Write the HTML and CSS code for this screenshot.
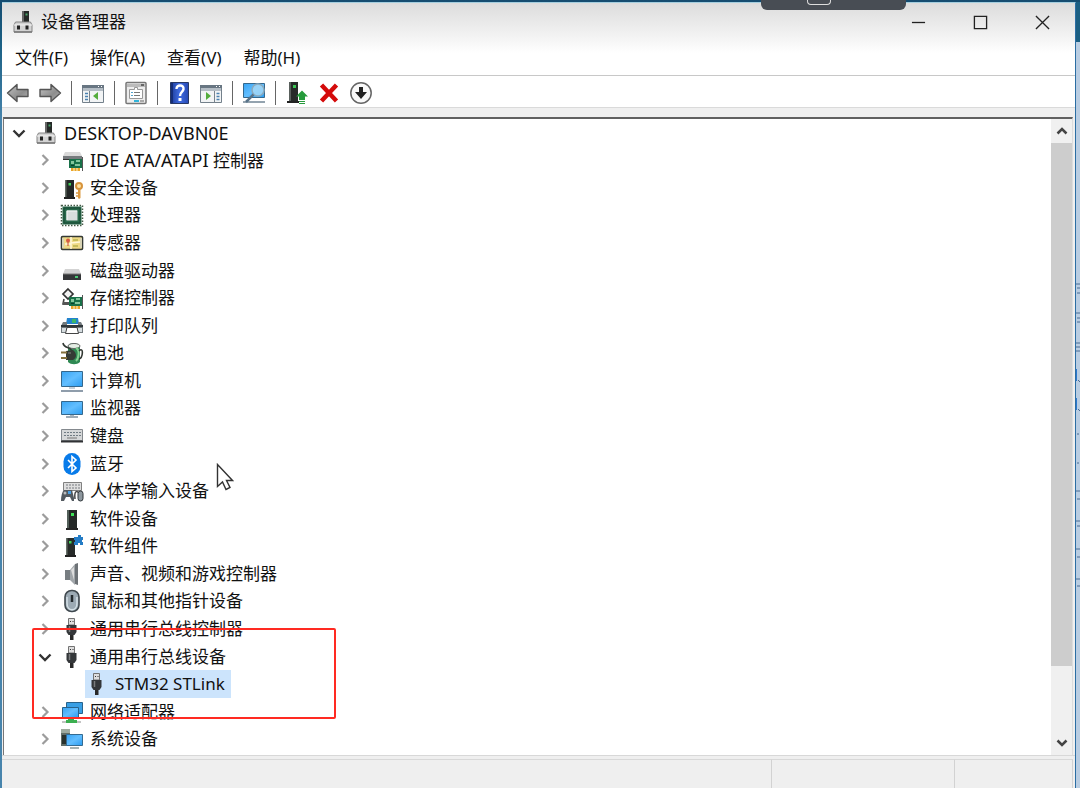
FILE: index.html
```html
<!DOCTYPE html>
<html lang="zh-CN">
<head>
<meta charset="utf-8">
<title>设备管理器</title>
<link rel="stylesheet" href="styles.css">
</head>
<body>
<svg class="sprite" aria-hidden="true">
  <defs>
    <linearGradient id="g-screen" x1="0" y1="0" x2="1" y2="1"><stop offset="0" stop-color="#37a4f4"/><stop offset=".5" stop-color="#62beff"/><stop offset="1" stop-color="#2b9cf0"/></linearGradient>
    <linearGradient id="g-arrow" x1="0" y1="0" x2="1" y2="1"><stop offset="0" stop-color="#c4c4c4"/><stop offset=".6" stop-color="#8d8d8d"/><stop offset="1" stop-color="#b4b4b4"/></linearGradient>
    <linearGradient id="g-help" x1="0" y1="0" x2="1" y2="0"><stop offset="0" stop-color="#1b3a97"/><stop offset=".5" stop-color="#3f6be0"/><stop offset="1" stop-color="#2649b4"/></linearGradient>
  </defs>
  <symbol id="right" viewBox="0 0 14 14"><path d="M4.500 2L9.500 7l-5 5" fill="none" stroke="#9c9c9c" stroke-width="2.200"/></symbol>
  <symbol id="down" viewBox="0 0 14 14"><path d="M1.500 4.500L7 10l5.500-5.500" fill="none" stroke="#333" stroke-width="2.400"/></symbol>
  <symbol id="devmgr" viewBox="0 0 24 24"><path d="M11 1h7v11h-7z" fill="#252927"/><path d="M11 1h2v11h-2z" fill="#666"/><path d="M14.500 3.500h2v2h-2z" fill="#48a568"/><path d="M4.500 12h15l1.500 3v7H3v-7z" fill="#d3d3d3" stroke="#858585"/><path d="M3 15h18" stroke="#f4f4f4"/><path d="M6 15.500h3v4H6zM14.500 15.500h3v4h-3z" fill="#222"/><path d="M3 22h18" stroke="#777" stroke-width="1.500"/></symbol>
  <symbol id="card" viewBox="0 0 24 24"><path d="M9 11h13v9H9z" fill="#197149"/><path d="M11 13h3v3h-3zM16 12h4v2h-4zM15 16h5v2h-5z" fill="#83c79c"/><path d="M11 17h3v1h-3z" fill="#0a402b"/><path d="M22.500 9v14" stroke="#555"/><path d="M11 20h9v3h-9z" fill="#eaa52a"/><path d="M14 20v3M17 20v3" stroke="#fff4cc"/></symbol>
  <symbol id="ide" viewBox="0 0 24 24"><path d="M5 4h15l2 4H3z" fill="#d9d9d9"/><path d="M3 8h19v4H3z" fill="#777b7e"/><path d="M3 11h11v1H3z" fill="#333"/><use href="#card" width="24" height="24"/></symbol>
  <symbol id="tower" viewBox="0 0 24 24"><path d="M7 3h10v18H7z" fill="#242827"/><path d="M7 3h2v18H7z" fill="#53605a"/><path d="M11 6h3v3h-3z" fill="#3fe357"/><path d="M6 21h12v2H6z" fill="#242424"/></symbol>
  <symbol id="security" viewBox="0 0 24 24"><path d="M5 4h9v17H5z" fill="#242827"/><path d="M5 4h1.500v17H5z" fill="#677069"/><path d="M8.500 7h2.500v2.500H8.500z" fill="#42d05a"/><path d="M4 21h11v2H4z" fill="#222"/><circle cx="19" cy="10" r="3" fill="#ffe2a1" stroke="#d7943c" stroke-width="2"/><path d="M18 13h2.500v9L19 23l-1-1z" fill="#db9b44"/><path d="M16 17h3M16 20h3" stroke="#db9b44" stroke-width="1.500"/></symbol>
  <symbol id="cpu" viewBox="0 0 24 24"><path d="M1.500 2.500h21v20h-21z" fill="none" stroke="#445a46" stroke-width="1.500" stroke-dasharray="1.500 1.500"/><path d="M2.500 3.500h19v18h-19z" fill="#28694b"/><path d="M4 5h16v15H4z" fill="none" stroke="#184934"/><path d="M6.500 7.500h11v10h-11z" fill="#d9dddd"/><path d="M7 17V8h10" fill="none" stroke="#f7f7f7"/></symbol>
  <symbol id="sensor" viewBox="0 0 24 24"><rect x="1.500" y="5.500" width="21" height="13" rx="1" fill="#efda86" stroke="#353a35" stroke-width="1.600"/><path d="M3 7v10M21 7v10" stroke="#d8d3b4" stroke-width="2"/><path d="M11 6v12M11 12l9-1M5 13h6" stroke="#fff9da" stroke-width="1.500"/><circle cx="8" cy="9.500" r="2" fill="#d75b42"/><path d="M8 11v4" stroke="#c74734"/><path d="M13 8h5v2h-5zM13 14h5v2h-5z" fill="#c6bd5c"/></symbol>
  <symbol id="disk" viewBox="0 0 24 24"><path d="M5 10h14l2 5H3z" fill="#d3d3d3"/><path d="M3 15h18v6H3z" fill="#343638"/><path d="M3 15h18" stroke="#777"/><path d="M15 17h3v2h-3z" fill="#4bc975"/></symbol>
  <symbol id="storage" viewBox="0 0 24 24"><path d="M8 3l5 5-5 5-5-5z" fill="#f2f2f2" stroke="#333" stroke-width="1.700"/><path d="M4 13l-1 5h7" fill="none" stroke="#444" stroke-width="1.600"/><path d="M3 16h7v3H3z" fill="#555"/><use href="#card" width="24" height="24"/></symbol>
  <symbol id="printer" viewBox="0 0 24 24"><path d="M7 4h11l1 6H6z" fill="#2383cd"/><path d="M12 5h4v4h-4z" fill="#3bb66a"/><path d="M3 8h4v3h11V8h3l2 4v7H1v-7z" fill="#72797d"/><path d="M1 11h22v2H1z" fill="#30373b"/><path d="M2 14h4v4H2zM18 14h4v4h-4z" fill="#d6dde0"/><path d="M7 13.500h10l1.500 6h-13z" fill="#fff" stroke="#444"/></symbol>
  <symbol id="battery" viewBox="0 0 24 24"><path d="M8 5c2-4 9-4 12 0v16c-3 3-9 3-12 0z" fill="#2f8953"/><ellipse cx="14" cy="5" rx="6" ry="2.500" fill="#e4eee5" stroke="#666"/><path d="M16 7c4 2 3 10 0 13" fill="none" stroke="#83cf90" stroke-width="2"/><path d="M3 2c1 6 7 3 9 8M19 10c5-5 4 7 0 8" fill="none" stroke="#323833" stroke-width="1.600"/><path d="M6 10l7-1c4 3 4 8 0 10H6z" fill="#343a35"/><path d="M1 11.500h6M1 17h6" stroke="#84703d" stroke-width="2"/><path d="M8 12h3" stroke="#888"/></symbol>
  <symbol id="computer" viewBox="0 0 24 24"><path d="M1.500 2.500h21v15h-21z" fill="url(#g-screen)" stroke="#35688d"/><path d="M9 18h6v2H9z" fill="#c6d0d8"/><path d="M1 22h22" stroke="#738596" stroke-width="1.600"/></symbol>
  <symbol id="monitor" viewBox="0 0 24 24"><path d="M1.500 5.500h21v13h-21z" fill="url(#g-screen)" stroke="#35688d"/><path d="M10 19h4v1h-4z" fill="#aab8c2"/><path d="M6 21h12" stroke="#7c8f9e" stroke-width="1.500"/></symbol>
  <symbol id="keyboard" viewBox="0 0 24 24"><path d="M1.500 5.500h21v11h-21z" fill="#d5d7d8" stroke="#84898e"/><path d="M4 8.500h17M4 11.500h17" stroke="#707b83" stroke-dasharray="2 1"/><path d="M7 14h10" stroke="#777"/><path d="M1 16.500h22v2H1z" fill="#303235"/></symbol>
  <symbol id="bluetooth" viewBox="0 0 24 24"><rect x="3.500" y="1" width="17" height="22" rx="8.500" fill="#087be9"/><path d="M8 8l8 8-4 3.500v-15L16 8l-8 8" fill="none" stroke="#fff" stroke-width="1.600"/></symbol>
  <symbol id="hid" viewBox="0 0 24 24"><path d="M3.500 3.500h18v8h-18z" fill="#dedede" stroke="#818181"/><path d="M6 6h14M6 9h14" stroke="#767b80" stroke-dasharray="2 1"/><path d="M4 11h8l2 8v3h-2l-2-4H6l-2 4H1c0-5 1-9 3-11z" fill="#535a60"/><circle cx="5" cy="14" r="1.500" fill="#bbb"/><path d="M8 12h3v3H8z" fill="#4ba0e2"/><path d="M15 20c-1-8 2-10 5-4" fill="none" stroke="#444" stroke-width="1.500"/><rect x="18" y="12" width="5" height="10" rx="2.500" fill="#8d979e" stroke="#30363a"/></symbol>
  <symbol id="component" viewBox="0 0 24 24"><path d="M6 4h9v17H6z" fill="#272b29"/><path d="M6 4h1.500v17H6z" fill="#677069"/><path d="M9 7h2.500v2.500H9z" fill="#42d05a"/><path d="M5 21h11v2H5z" fill="#222"/><path d="M14 3h4V1h3v2h2v3h-1v2h1v3h-3V9h-2v2h-4V8h1V6h-1z" fill="#247cc5"/></symbol>
  <symbol id="speaker" viewBox="0 0 24 24"><path d="M5 8h5v10H5z" fill="#777d81"/><path d="M10 8l5-6v21l-5-5z" fill="#a1a6aa"/><path d="M15 2l3-1v22l-3-1z" fill="#6e7377"/><path d="M11 8l3-3v13z" fill="#ddd"/></symbol>
  <symbol id="mouse" viewBox="0 0 24 24"><rect x="5" y="1.500" width="14" height="21" rx="6.500" fill="#9caab4" stroke="#3f484e" stroke-width="1.600"/><path d="M7 8v6c0 9 10 9 10 0V8" fill="none" stroke="#d4e0e6" stroke-width="1.500"/><path d="M12 6v7" stroke="#252b2f" stroke-width="2.500"/></symbol>
  <symbol id="usb" viewBox="0 0 24 24"><path d="M8.500 1.500h6V8h-6z" fill="#dedede" stroke="#737373"/><path d="M10 4h1v1h-1zM12.500 4h1v1h-1z" fill="#333"/><path d="M6.500 8h10v7l-2 3h-6l-2-3z" fill="#34373a"/><path d="M9.500 9v6" stroke="#7a7c7e" stroke-width="1.500"/><path d="M10 18h3.500v5H10z" fill="#292929"/></symbol>
  <symbol id="network" viewBox="0 0 24 24"><path d="M6.500 2.500h16v11h-16z" fill="#389fe5" stroke="#28638c"/><path d="M2.500 7.500h16v10h-16z" fill="url(#g-screen)" stroke="#28638c"/><path d="M2 22h19" stroke="#c4c4c4" stroke-width="2"/><path d="M8 19h6v1h3v3H6v-3h2z" fill="#3baf50"/></symbol>
  <symbol id="system" viewBox="0 0 24 24"><path d="M1 2h9v17H1z" fill="#626e67"/><path d="M1 2h9v4H1z" fill="#9fab9f"/><path d="M2 8h4v9H2z" fill="#29322e"/><path d="M6.500 7.500h16v11h-16z" fill="url(#g-screen)" stroke="#356b91"/><path d="M10 21h9" stroke="#899" stroke-width="1.500"/></symbol>
  <symbol id="back" viewBox="0 0 24 24"><path d="M1.500 12L11 3.500v5h11v7H11v5z" fill="url(#g-arrow)" stroke="#555" stroke-width="1.400" stroke-linejoin="round"/></symbol>
  <symbol id="forward" viewBox="0 0 24 24"><path d="M22.500 12L13 3.500v5H2v7h11v5z" fill="url(#g-arrow)" stroke="#555" stroke-width="1.400" stroke-linejoin="round"/></symbol>
  <symbol id="console" viewBox="0 0 24 24"><path d="M1.500 4.500h21v17h-21z" fill="#f2f4f5" stroke="#73808b"/><path d="M1 4h22v3H1z" fill="#687682"/><path d="M17 5h1v1h-1zM20 5h1v1h-1z" fill="#fff"/><path d="M2 7h20v3H2z" fill="#b4bdc5"/><path d="M8.500 10v12" stroke="#78838d"/><path d="M4 12.500h3M4 15.500h3M4 18.500h3" stroke="#4b82b1" stroke-width="1.500"/><path d="M17 11v8l-5-4z" fill="#54ad3c"/></symbol>
  <symbol id="action" viewBox="0 0 24 24"><path d="M1.500 4.500h21v17h-21z" fill="#f2f4f5" stroke="#73808b"/><path d="M1 4h22v3H1z" fill="#687682"/><path d="M17 5h1v1h-1zM20 5h1v1h-1z" fill="#fff"/><path d="M2 7h20v3H2z" fill="#b4bdc5"/><path d="M15.500 10v12" stroke="#78838d"/><path d="M17.500 12.500h3M17.500 15.500h3M17.500 18.500h3" stroke="#4b82b1" stroke-width="1.500"/><path d="M7 11v8l5-4z" fill="#54ad3c"/></symbol>
  <symbol id="properties" viewBox="0 0 24 24"><rect x="2" y="1.500" width="20" height="21" rx="1" fill="#ededed" stroke="#777" stroke-width="1.500"/><path d="M3 4.500h18" stroke="#bbb" stroke-width="3"/><path d="M17 3h3v2h-3z" fill="#666"/><path d="M5.500 8.500h5v-2h3v2h5v9h-13z" fill="#fff" stroke="#999"/><path d="M10 11.500h6M10 14.500h6" stroke="#777"/><path d="M7 11.500h2M7 14.500h2" stroke="#52a4cc"/><path d="M10 20h5" stroke="#31b4da" stroke-width="2"/><path d="M16 20h4" stroke="#aaa" stroke-width="2"/></symbol>
  <symbol id="help" viewBox="0 0 24 24"><path d="M3.500 1.500h18v21h-18z" fill="url(#g-help)" stroke="#283864"/><path d="M5 2v20" stroke="#142d79" stroke-width="2"/><path d="M9.500 8c0-5 7.500-4.500 7 0-.3 3-3.500 3-3.500 7" fill="none" stroke="#fff" stroke-width="2.400"/><path d="M11.500 17h3v3h-3z" fill="#fff"/></symbol>
  <symbol id="scan" viewBox="0 0 24 24"><path d="M1.500 2.500h21v14h-21z" fill="url(#g-screen)" stroke="#35688d"/><path d="M1 21h22" stroke="#718495" stroke-width="1.500"/><circle cx="16" cy="9" r="6" fill="#a8daf6" fill-opacity=".8" stroke="#8baabd" stroke-width="1.500"/><path d="M11.500 13.500L4 21" stroke="#59748a" stroke-width="2.500"/></symbol>
  <symbol id="update" viewBox="0 0 24 24"><path d="M4 1h9v19H4z" fill="#272b29"/><path d="M4 1h2v19H4z" fill="#59605c"/><path d="M8 4h3v3H8z" fill="#3dc654"/><path d="M2 20h12v2H2z" fill="#222"/><path d="M17 9.500l6 6h-3V19h-6v-3.500h-3z" fill="#269b3b"/><path d="M14 20.500h6M14 22.500h6" stroke="#269b3b"/></symbol>
  <symbol id="remove" viewBox="0 0 24 24"><path d="M4.500 4l15 16M19.500 4l-15 16" stroke="#d40b0b" stroke-width="4.500"/></symbol>
  <symbol id="disable" viewBox="0 0 24 24"><circle cx="12" cy="12" r="10.200" fill="#fafafa" stroke="#666" stroke-width="1.500"/><path d="M10 6h4v5h4l-6 7-6-7h4z" fill="#222"/></symbol>
</svg>

<div class="desktop">
  <main class="window">
    <header class="titlebar">
      <svg class="icon"><use href="#devmgr"/></svg>
      <h1 class="title">设备管理器</h1>
      <div class="controls">
        <button class="control" aria-label="最小化"><svg class="glyph" viewBox="0 0 16 16"><path d="M1 8h14"/></svg></button>
        <button class="control" aria-label="最大化"><svg class="glyph" viewBox="0 0 16 16"><path d="M1.500 1.500h13v13h-13z"/></svg></button>
        <button class="control" aria-label="关闭"><svg class="glyph" viewBox="0 0 16 16"><path d="M1 1l14 14M15 1L1 15"/></svg></button>
      </div>
    </header>
    <nav class="menubar">
      <button class="menu">文件(F)</button>
      <button class="menu">操作(A)</button>
      <button class="menu">查看(V)</button>
      <button class="menu">帮助(H)</button>
    </nav>
    <div class="toolbar" role="toolbar">
      <button class="tool" aria-label="后退"><svg class="icon"><use href="#back"/></svg></button>
      <button class="tool" aria-label="前进"><svg class="icon"><use href="#forward"/></svg></button>
      <span class="separator"></span>
      <button class="tool" aria-label="显示控制台树"><svg class="icon"><use href="#console"/></svg></button>
      <span class="separator"></span>
      <button class="tool" aria-label="属性"><svg class="icon"><use href="#properties"/></svg></button>
      <span class="separator"></span>
      <button class="tool" aria-label="帮助"><svg class="icon"><use href="#help"/></svg></button>
      <button class="tool" aria-label="显示操作窗格"><svg class="icon"><use href="#action"/></svg></button>
      <span class="separator"></span>
      <button class="tool" aria-label="扫描硬件改动"><svg class="icon"><use href="#scan"/></svg></button>
      <span class="separator"></span>
      <button class="tool" aria-label="更新驱动程序"><svg class="icon"><use href="#update"/></svg></button>
      <button class="tool" aria-label="卸载设备"><svg class="icon"><use href="#remove"/></svg></button>
      <button class="tool" aria-label="禁用设备"><svg class="icon"><use href="#disable"/></svg></button>
    </div>
    <section class="pane">
      <ul class="tree" role="tree">
        <li class="row latin" role="treeitem" aria-level="1"><button class="toggle" aria-label="折叠"><svg class="chevron"><use href="#down"/></svg></button><span class="node"><svg class="icon"><use href="#devmgr"/></svg>DESKTOP-DAVBN0E</span></li>
        <li class="row child" role="treeitem" aria-level="2"><button class="toggle" aria-label="展开"><svg class="chevron"><use href="#right"/></svg></button><span class="node"><svg class="icon"><use href="#ide"/></svg><span><span class="latin">IDE ATA/ATAPI</span> 控制器</span></span></li>
        <li class="row child" role="treeitem" aria-level="2"><button class="toggle" aria-label="展开"><svg class="chevron"><use href="#right"/></svg></button><span class="node"><svg class="icon"><use href="#security"/></svg>安全设备</span></li>
        <li class="row child" role="treeitem" aria-level="2"><button class="toggle" aria-label="展开"><svg class="chevron"><use href="#right"/></svg></button><span class="node"><svg class="icon"><use href="#cpu"/></svg>处理器</span></li>
        <li class="row child" role="treeitem" aria-level="2"><button class="toggle" aria-label="展开"><svg class="chevron"><use href="#right"/></svg></button><span class="node"><svg class="icon"><use href="#sensor"/></svg>传感器</span></li>
        <li class="row child" role="treeitem" aria-level="2"><button class="toggle" aria-label="展开"><svg class="chevron"><use href="#right"/></svg></button><span class="node"><svg class="icon"><use href="#disk"/></svg>磁盘驱动器</span></li>
        <li class="row child" role="treeitem" aria-level="2"><button class="toggle" aria-label="展开"><svg class="chevron"><use href="#right"/></svg></button><span class="node"><svg class="icon"><use href="#storage"/></svg>存储控制器</span></li>
        <li class="row child" role="treeitem" aria-level="2"><button class="toggle" aria-label="展开"><svg class="chevron"><use href="#right"/></svg></button><span class="node"><svg class="icon"><use href="#printer"/></svg>打印队列</span></li>
        <li class="row child" role="treeitem" aria-level="2"><button class="toggle" aria-label="展开"><svg class="chevron"><use href="#right"/></svg></button><span class="node"><svg class="icon"><use href="#battery"/></svg>电池</span></li>
        <li class="row child" role="treeitem" aria-level="2"><button class="toggle" aria-label="展开"><svg class="chevron"><use href="#right"/></svg></button><span class="node"><svg class="icon"><use href="#computer"/></svg>计算机</span></li>
        <li class="row child" role="treeitem" aria-level="2"><button class="toggle" aria-label="展开"><svg class="chevron"><use href="#right"/></svg></button><span class="node"><svg class="icon"><use href="#monitor"/></svg>监视器</span></li>
        <li class="row child" role="treeitem" aria-level="2"><button class="toggle" aria-label="展开"><svg class="chevron"><use href="#right"/></svg></button><span class="node"><svg class="icon"><use href="#keyboard"/></svg>键盘</span></li>
        <li class="row child" role="treeitem" aria-level="2"><button class="toggle" aria-label="展开"><svg class="chevron"><use href="#right"/></svg></button><span class="node"><svg class="icon"><use href="#bluetooth"/></svg>蓝牙</span></li>
        <li class="row child" role="treeitem" aria-level="2"><button class="toggle" aria-label="展开"><svg class="chevron"><use href="#right"/></svg></button><span class="node"><svg class="icon"><use href="#hid"/></svg>人体学输入设备</span></li>
        <li class="row child" role="treeitem" aria-level="2"><button class="toggle" aria-label="展开"><svg class="chevron"><use href="#right"/></svg></button><span class="node"><svg class="icon"><use href="#tower"/></svg>软件设备</span></li>
        <li class="row child" role="treeitem" aria-level="2"><button class="toggle" aria-label="展开"><svg class="chevron"><use href="#right"/></svg></button><span class="node"><svg class="icon"><use href="#component"/></svg>软件组件</span></li>
        <li class="row child" role="treeitem" aria-level="2"><button class="toggle" aria-label="展开"><svg class="chevron"><use href="#right"/></svg></button><span class="node"><svg class="icon"><use href="#speaker"/></svg>声音、视频和游戏控制器</span></li>
        <li class="row child" role="treeitem" aria-level="2"><button class="toggle" aria-label="展开"><svg class="chevron"><use href="#right"/></svg></button><span class="node"><svg class="icon"><use href="#mouse"/></svg>鼠标和其他指针设备</span></li>
        <li class="row child" role="treeitem" aria-level="2"><button class="toggle" aria-label="展开"><svg class="chevron"><use href="#right"/></svg></button><span class="node"><svg class="icon"><use href="#usb"/></svg>通用串行总线控制器</span></li>
        <li class="row child" role="treeitem" aria-level="2"><button class="toggle" aria-label="折叠"><svg class="chevron"><use href="#down"/></svg></button><span class="node"><svg class="icon"><use href="#usb"/></svg>通用串行总线设备</span></li>
        <li class="row leaf" role="treeitem" aria-level="3" aria-selected="true"><span class="node selected"><svg class="icon"><use href="#usb"/></svg>STM32 STLink</span></li>
        <li class="row child" role="treeitem" aria-level="2"><button class="toggle" aria-label="展开"><svg class="chevron"><use href="#right"/></svg></button><span class="node"><svg class="icon"><use href="#network"/></svg>网络适配器</span></li>
        <li class="row child" role="treeitem" aria-level="2"><button class="toggle" aria-label="展开"><svg class="chevron"><use href="#right"/></svg></button><span class="node"><svg class="icon"><use href="#system"/></svg>系统设备</span></li>
      </ul>
      <div class="scrollbar">
        <button class="scroll-button" aria-label="向上滚动"><svg class="scroll-glyph" viewBox="0 0 14 14"><path d="M2.500 9.500L7 5l4.500 4.500"/></svg></button>
        <div class="track"><div class="thumb"></div></div>
        <button class="scroll-button" aria-label="向下滚动"><svg class="scroll-glyph" viewBox="0 0 14 14"><path d="M2.500 4.500L7 9l4.500-4.500"/></svg></button>
      </div>
      <div class="highlight"></div>
      <svg class="pointer" viewBox="0 0 18 28"><path d="M1.500 1.500v22l5-4.500 3.500 7.500 4-2-3.500-7h6z" fill="#fff" stroke="#333" stroke-width="1.400"/></svg>
    </section>
    <footer class="statusbar"><span class="status"></span><span class="status"></span><span class="status"></span></footer>
  </main>
  <div class="backdrop">
    <svg class="marks" viewBox="0 0 4 320"><path d="M0 2h4M1 6h3M1 11h3M0 31h4M1 36h3M1 40h3M0 61h4M0 65h4M0 69h4M2 98l2 2M2 127l2 2M1 152h2M1 181h2M0 209h4M1 217h3M0 239h4M1 244h3M0 267h4M1 275h3M0 297h4M1 304h3" fill="none" stroke="#4a6c94"/><path d="M.5 87v12M.5 116v12" stroke="#2c78cf"/></svg>
  </div>
  <div class="capture-bar"><span class="capture-key"></span></div>
</div>
</body>
</html>
```
FILE: styles.css
```css
* {
  box-sizing: border-box;
}

body {
  margin: 0;
  color: #111;
  font-family: "Noto Sans", "Noto Sans CJK SC", sans-serif;
  font-size: 17px;
  line-height: 24px;
}

button {
  padding: 0;
  border: 0;
  background: none;
  color: inherit;
  font: inherit;
}

.sprite {
  position: absolute;
  width: 0;
  height: 0;
}

.icon {
  display: block;
  flex: none;
  width: 24px;
  height: 24px;
}

.latin {
  font-size: 18px;
}

.desktop {
  position: relative;
  display: flex;
  min-height: 100vh;
  padding: 2px 0 0 2px;
  background: linear-gradient(#154c70 0, #1b6084 44px, #4784ac 120px, #4784ac 100%);
}

.window {
  display: flex;
  flex: 1;
  flex-direction: column;
  border-top: 1px solid #a5cfdf;
  border-right: 1px solid #2b6da3;
  background: #efefef;
}

.titlebar {
  display: flex;
  align-items: center;
  height: 38px;
  padding: 0 2px 0 9px;
  background: linear-gradient(#dcdcdc, #f6f6f6);
}

.title {
  flex: 1;
  margin: 0 0 0 6px;
  font-size: 17px;
  font-weight: 400;
}

.controls {
  display: flex;
}

.control {
  display: grid;
  place-items: center;
  width: 62px;
  height: 36px;
}

.glyph {
  width: 15px;
  height: 15px;
  fill: none;
  stroke: #222;
  stroke-width: 1.4;
}

.menubar {
  display: flex;
  gap: 22px;
  height: 35px;
  padding-left: 13px;
  border-bottom: 1px solid #c8c8c8;
  background: linear-gradient(#f6f6f6, #fff 12px);
}

.toolbar {
  display: flex;
  align-items: center;
  height: 32px;
  padding-top: 2px;
  border-bottom: 1px solid #dadada;
  background: #fff;
}

.tool {
  display: grid;
  place-items: center;
  width: 32px;
  height: 28px;
}

.separator {
  display: flex;
  justify-content: center;
  width: 11px;
}

.separator::before {
  width: 1px;
  height: 24px;
  background: #666;
  content: "";
}

.pane {
  position: relative;
  display: flex;
  flex: 1;
  margin: 9px 2px 0 1px;
  border-top: 2px solid #606060;
  border-right: 1px solid #dcdcdc;
  border-left: 1px solid #777;
  background: #fff;
}

.tree {
  display: grid;
  flex: 1;
  grid-auto-rows: minmax(24px, 1fr);
  margin: 0;
  padding: 0 0 2px 1px;
  list-style: none;
}

.row {
  display: flex;
  gap: 2px;
  align-items: stretch;
}

.child {
  padding-left: 26px;
}

.leaf {
  padding-left: 80px;
}

.toggle {
  display: grid;
  place-items: center;
  width: 27px;
}

.chevron {
  width: 14px;
  height: 14px;
}

.node {
  display: flex;
  gap: 6px;
  align-items: center;
  padding-right: 6px;
}

.selected {
  background: #cce4fc;
}

.scrollbar {
  display: flex;
  flex-direction: column;
  width: 21px;
  background: #f0f0f0;
}

.scroll-button {
  display: grid;
  place-items: center;
  height: 24px;
}

.scroll-glyph {
  width: 14px;
  height: 14px;
  fill: none;
  stroke: #444;
  stroke-width: 2.5;
}

.track {
  flex: 1;
}

.thumb {
  height: 89%;
  background: #cdcdcd;
}

.highlight {
  position: absolute;
  top: 509px;
  left: 28px;
  width: 304px;
  height: 91px;
  border: 2px solid #ff2a22;
  border-radius: 2px;
  pointer-events: none;
}

.pointer {
  position: absolute;
  top: 344px;
  left: 212px;
  width: 18px;
  height: 28px;
}

.statusbar {
  display: grid;
  grid-template-columns: 770fr 183fr 118fr;
  height: 33px;
  padding: 3px 2px 0 0;
  border-top: 1px solid #d8d8d8;
}

.status {
  border-top: 1px solid #d8d8d8;
  border-right: 1px solid #d2d2d2;
}

.backdrop {
  flex: none;
  width: 4px;
  padding-top: 280px;
  background: linear-gradient(#1b5f83 40px, #b9cde2 40px);
}

.marks {
  display: block;
  width: 4px;
  height: 320px;
}

.capture-bar {
  position: absolute;
  top: 0;
  right: 174px;
  display: flex;
  justify-content: center;
  width: 145px;
  height: 10px;
  padding-right: 30px;
  border-radius: 0 0 6px 6px;
  background: #484d54;
}

.capture-key {
  width: 24px;
  height: 5px;
  border: 1px solid #ddd;
  border-top: 0;
  border-radius: 0 0 4px 4px;
}
```
